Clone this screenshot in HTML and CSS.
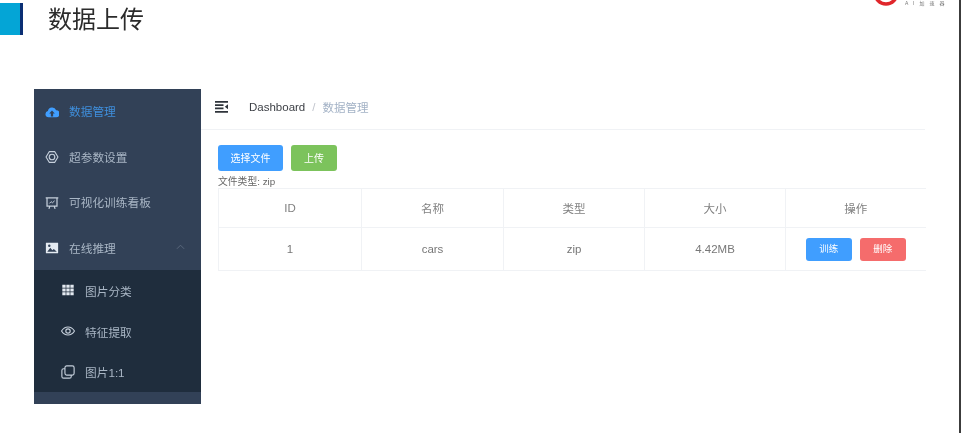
FILE: index.html
```html
<!DOCTYPE html>
<html lang="zh">
<head>
<meta charset="utf-8">
<title>数据上传</title>
<link rel="stylesheet" href="styles.css">
</head>
<body>
<div class="slide">
  <header class="slide-head">
    <div class="mark"></div>
    <h1 class="title">数据上传</h1>
    <div class="logo">
      <svg class="logo-ring" width="28" height="8" viewBox="0 0 28 8"><circle cx="13" cy="-7" r="11" fill="none" stroke="#e0262b" stroke-width="3.5"/></svg>
      <span class="logo-text">A I 加 速 器</span>
    </div>
  </header>
  <div class="app">
    <nav class="side">
      <div class="item active">
        <svg class="ico" viewBox="0 0 16 16"><path fill="#409eff" d="M4 14a3.6 3.6 0 0 1-.7-7.1A5 5 0 0 1 12.8 6a4 4 0 0 1-.4 8z"/><path fill="#324157" d="M8 6.4l3.2 3.2H9.3V13H6.7V9.6H4.8z"/></svg>
        <span>数据管理</span>
      </div>
      <div class="item">
        <svg class="ico" viewBox="0 0 16 16" fill="none" stroke="#c6d0dc" stroke-width="1.3"><path d="M5 1.8h6l3.8 6.2-3.8 6.2H5L1.2 8z" stroke-linejoin="round"/><circle cx="8" cy="8" r="3.2"/></svg>
        <span>超参数设置</span>
      </div>
      <div class="item">
        <svg class="ico" viewBox="0 0 16 16" fill="none" stroke="#c6d0dc" stroke-width="1.4"><path d="M.8 2.2h14.4M2.3 2.2v9.3h11.4V2.2M5.5 11.5l-1 3.2M10.5 11.5l1 3.2"/><path d="M5 8.5l2-2 1.5 1.2L11 5.5" stroke-width="1.1"/></svg>
        <span>可视化训练看板</span>
      </div>
      <div class="item">
        <svg class="ico" viewBox="0 0 16 16"><path fill="#e4eaf1" d="M1 2h14v12H1z"/><path fill="#324157" d="M2.6 12.4l3.4-4.6 2.4 2.7 1.7-1.5 3.4 3.4z"/><circle cx="4.9" cy="5.4" r="1.4" fill="#324157"/></svg>
        <span>在线推理</span>
        <svg class="chev" viewBox="0 0 10 6" fill="none" stroke="#5d6c80" stroke-width="1"><path d="M1 5l4-4 4 4"/></svg>
      </div>
      <div class="sub">
        <div class="item sub-item">
          <svg class="ico" viewBox="0 0 16 16" fill="#e4eaf1"><path d="M1.5 2h3.8v3.4H1.5zM6.1 2h3.8v3.4H6.1zM10.7 2h3.8v3.4h-3.8zM1.5 6.3h3.8v3.4H1.5zM6.1 6.3h3.8v3.4H6.1zM10.7 6.3h3.8v3.4h-3.8zM1.5 10.6h3.8V14H1.5zM6.1 10.6h3.8V14H6.1zM10.7 10.6h3.8V14h-3.8z"/></svg>
          <span>图片分类</span>
        </div>
        <div class="item sub-item">
          <svg class="ico" viewBox="0 0 16 16" fill="none" stroke="#c6d0dc" stroke-width="1.3"><path d="M.6 8C2.5 5 5 3.4 8 3.4S13.5 5 15.4 8c-1.9 3-4.4 4.6-7.4 4.6S2.5 11 .6 8z"/><circle cx="8" cy="8" r="2.5"/></svg>
          <span>特征提取</span>
        </div>
        <div class="item sub-item">
          <svg class="ico" viewBox="0 0 16 16" fill="none" stroke="#c6d0dc" stroke-width="1.3"><rect x="4.5" y="1" width="10.5" height="10.5" rx="2"/><path d="M4.5 4.3H3a2 2 0 0 0-2 2V13a2 2 0 0 0 2 2h6.7a2 2 0 0 0 2-2v-1.5"/></svg>
          <span>图片1:1</span>
        </div>
      </div>
    </nav>
    <main class="content">
      <div class="crumbs">
        <svg class="burger" viewBox="0 0 14 12" fill="#2f343b"><path d="M0 0h13v1.7H0zM0 3.2h8.5v1.7H0zM0 6.5h8.5v1.7H0zM0 10h13v1.7H0zM13 3.2v5L9.8 5.7z"/></svg>
        <span class="crumb-home">Dashboard</span>
        <span class="crumb-sep">/</span>
        <span class="crumb-now">数据管理</span>
      </div>
      <div class="actions">
        <button class="btn btn-blue btn-file">选择文件</button>
        <button class="btn btn-green btn-up">上传</button>
      </div>
      <div class="hint">文件类型: zip</div>
      <table class="grid">
        <colgroup><col class="c1"><col class="c2"><col class="c3"><col class="c4"><col class="c5"></colgroup>
        <thead>
          <tr><th>ID</th><th>名称</th><th>类型</th><th>大小</th><th>操作</th></tr>
        </thead>
        <tbody>
          <tr>
            <td>1</td><td>cars</td><td>zip</td><td>4.42MB</td>
            <td><div class="ops"><button class="btn btn-blue btn-op">训练</button><button class="btn btn-red btn-op">删除</button></div></td>
          </tr>
        </tbody>
      </table>
    </main>
  </div>
</div>
</body>
</html>
```
FILE: styles.css
```css
* { box-sizing: border-box; }
html, body { margin: 0; padding: 0; background: #fff; }
body { font-family: "Liberation Sans", "Noto Sans CJK SC", sans-serif; overflow: hidden; }
.slide {
  width: 961px;
  height: 433px;
  border-right: 2px solid #3c3c3c;
  overflow: hidden;
  filter: blur(0.5px);
}
.slide-head { display: flex; align-items: flex-start; height: 89px; }
.mark {
  width: 23px;
  height: 32px;
  margin-top: 3px;
  background: #04a5d6;
  border-right: 3px solid #0b2f74;
}
.title {
  margin: 4px 0 0 25px;
  font-size: 24px;
  line-height: 32px;
  font-weight: 400;
  color: #2b2b2b;
}
.logo { margin-left: auto; margin-right: 8px; display: flex; align-items: flex-start; width: 78px; }
.logo-ring { flex: none; }
.logo-text { margin: 0 0 0 4px; font-size: 5px; line-height: 7px; letter-spacing: 1.8px; color: #777; white-space: nowrap; }
.app { display: flex; margin-left: 34px; }
.side { width: 167px; height: 315px; background: #324157; flex: none; }
.item {
  display: flex;
  align-items: center;
  height: 45.5px;
  padding: 0 0 2px 11px;
  font-size: 11.7px;
  color: #a9b6c5;
}
.item .ico { width: 14px; height: 14px; margin: 2px 10px 0 0; flex: none; }
.item.active { color: #3f8fdc; }
.chev { width: 9px; height: 6px; margin-left: auto; margin-right: 16px; }
.sub { background: #1f2d3d; height: 122px; margin-top: -1px; }
.sub-item { height: 40.7px; padding: 0 0 0 27px; }
.sub-item .ico { margin-top: 0; }
.content { width: 724px; height: 315px; padding: 0 0 0 17px; }
.crumbs {
  display: flex;
  align-items: center;
  height: 41px;
  margin: 0 0 0 -17px;
  padding: 0 0 5px 14px;
  border-bottom: 1px solid #f0f2f5;
  font-size: 11.5px;
}
.burger { width: 14px; height: 12px; margin-right: 20px; }
.crumb-home { color: #3c3f45; }
.crumb-sep { margin: 0 7px; color: #c0c4cc; }
.crumb-now { color: #a3b2c6; }
.actions { display: flex; gap: 8px; margin-top: 15px; }
.btn { border: 0; border-radius: 3px; color: #fff; font: inherit; padding: 0 0 2px; }
.btn-blue { background: #409eff; }
.btn-green { background: #7cc35c; }
.btn-red { background: #f56c6c; }
.btn-file { width: 65px; height: 26px; font-size: 10px; }
.btn-up { width: 46px; height: 26px; font-size: 10px; }
.hint { font-size: 9.8px; line-height: 12px; margin-top: 5px; color: #666; height: 12px; }
.grid {
  border-collapse: collapse;
  table-layout: fixed;
  width: 707px;
  font-size: 11.5px;
  color: #777;
  text-align: center;
}
.c1 { width: 143px; } .c2 { width: 142px; } .c3 { width: 141px; } .c4 { width: 141px; } .c5 { width: 140px; }
.grid th { font-weight: 400; height: 39px; color: #808080; }
.grid td { height: 43px; }
.grid th, .grid td { border: 1px solid #f0f2f5; padding: 0; }
.grid th:last-child, .grid td:last-child { border-right: 0; }
.ops { display: flex; justify-content: center; gap: 8px; }
.btn-op { width: 46px; height: 23px; font-size: 9.5px; }
```
